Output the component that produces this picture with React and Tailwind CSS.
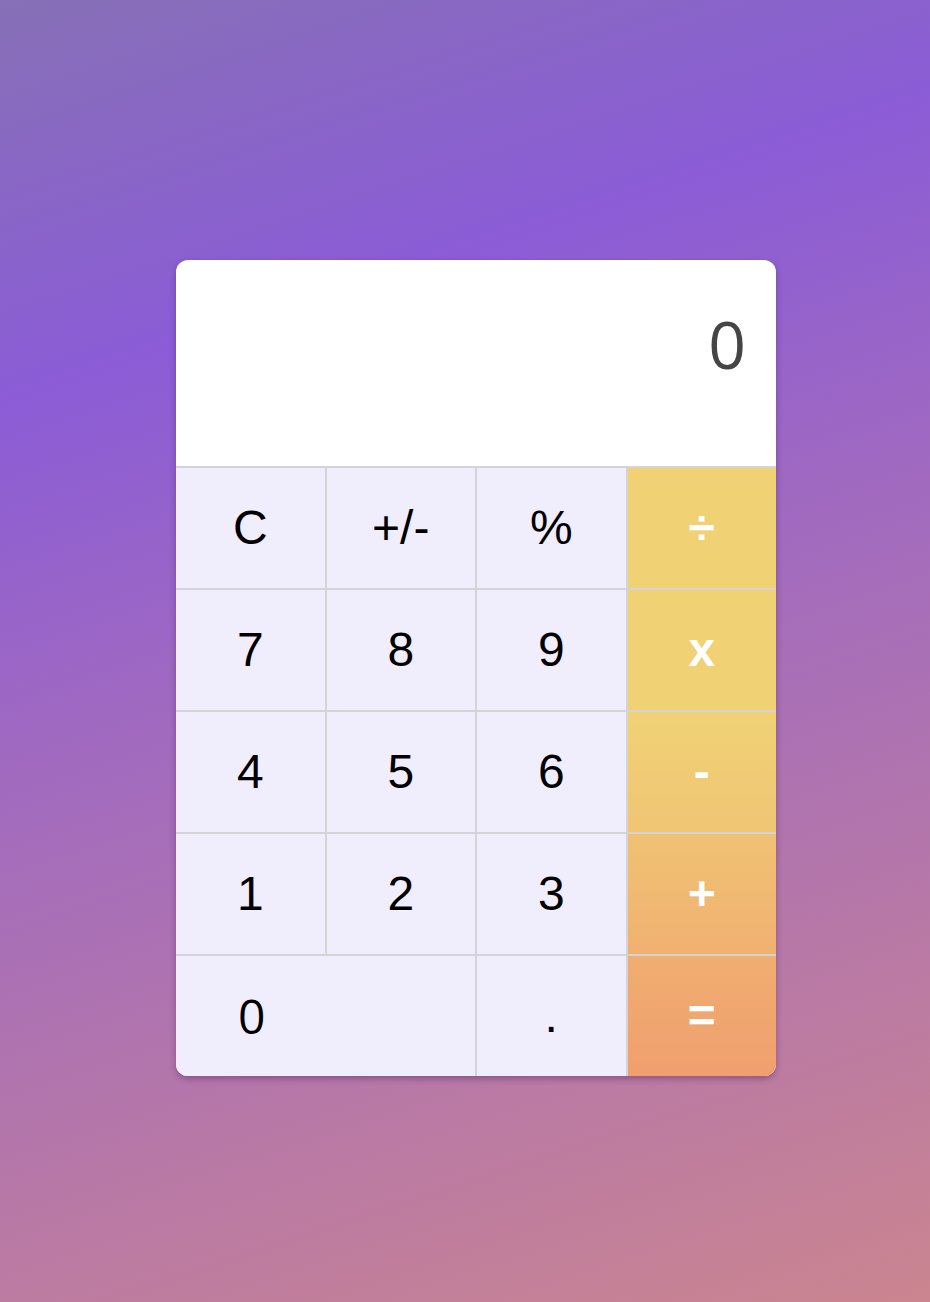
import React, { useState } from "react";

const keys = [
  { label: "C", type: "fn" },
  { label: "+/-", type: "fn" },
  { label: "%", type: "fn" },
  { label: "÷", type: "op", bg: "bg-[#f0d274]" },
  { label: "7" },
  { label: "8" },
  { label: "9" },
  { label: "x", type: "op", bg: "bg-[#f0d274]" },
  { label: "4" },
  { label: "5" },
  { label: "6" },
  { label: "-", type: "op", bg: "bg-[linear-gradient(180deg,#f0d275,#f0c574)]" },
  { label: "1" },
  { label: "2" },
  { label: "3" },
  { label: "+", type: "op", bg: "bg-[linear-gradient(180deg,#f0c274,#f0b171)]" },
  { label: "0", type: "zero" },
  { label: "." },
  { label: "=", type: "op", bg: "bg-[linear-gradient(180deg,#f0ae71,#f09f6e)]" },
];

const Calculator = () => {
  const [display] = useState("0");

  return (
    <div className="w-[600px] rounded-xl bg-white shadow-[0_3px_6px_rgba(60,20,80,0.35)] overflow-hidden">
      {/* Display */}
      <div className="h-[206px] flex justify-end items-start pt-[50px] pr-[30px]">
        <span className="font-['Open_Sans',sans-serif] text-[66px] leading-none text-[#454545]">
          {display}
        </span>
      </div>

      {/* Keypad */}
      <div className="grid grid-cols-4 auto-rows-[120px] gap-[2px] pt-[2px] bg-[#d4d4d6]">
        {keys.map((key, index) => {
          if (key.type === "op") {
            return (
              <button
                key={index}
                className={`${key.bg} flex items-center justify-center text-white font-bold text-[48px] font-['Liberation_Sans',Arial,sans-serif]`}
              >
                {key.label}
              </button>
            );
          }
          if (key.type === "zero") {
            return (
              <button
                key={index}
                className="col-span-2 bg-[#f0edfd] flex items-center justify-start pl-[62px] text-black text-[48px] font-['Open_Sans',sans-serif]"
              >
                {key.label}
              </button>
            );
          }
          return (
            <button
              key={index}
              className="bg-[#f0edfd] flex items-center justify-center text-black text-[48px] font-['Liberation_Sans',Arial,sans-serif]"
            >
              {key.label}
            </button>
          );
        })}
      </div>
    </div>
  );
};

const App = () => {
  return (
    <div className="min-h-screen w-full bg-[linear-gradient(162deg,#8770b6_0%,#8b5cd6_25%,#a46cbc_52%,#cb8590_100%)] pt-[260px] pl-[176px]">
      <Calculator />
    </div>
  );
};

export default App;
